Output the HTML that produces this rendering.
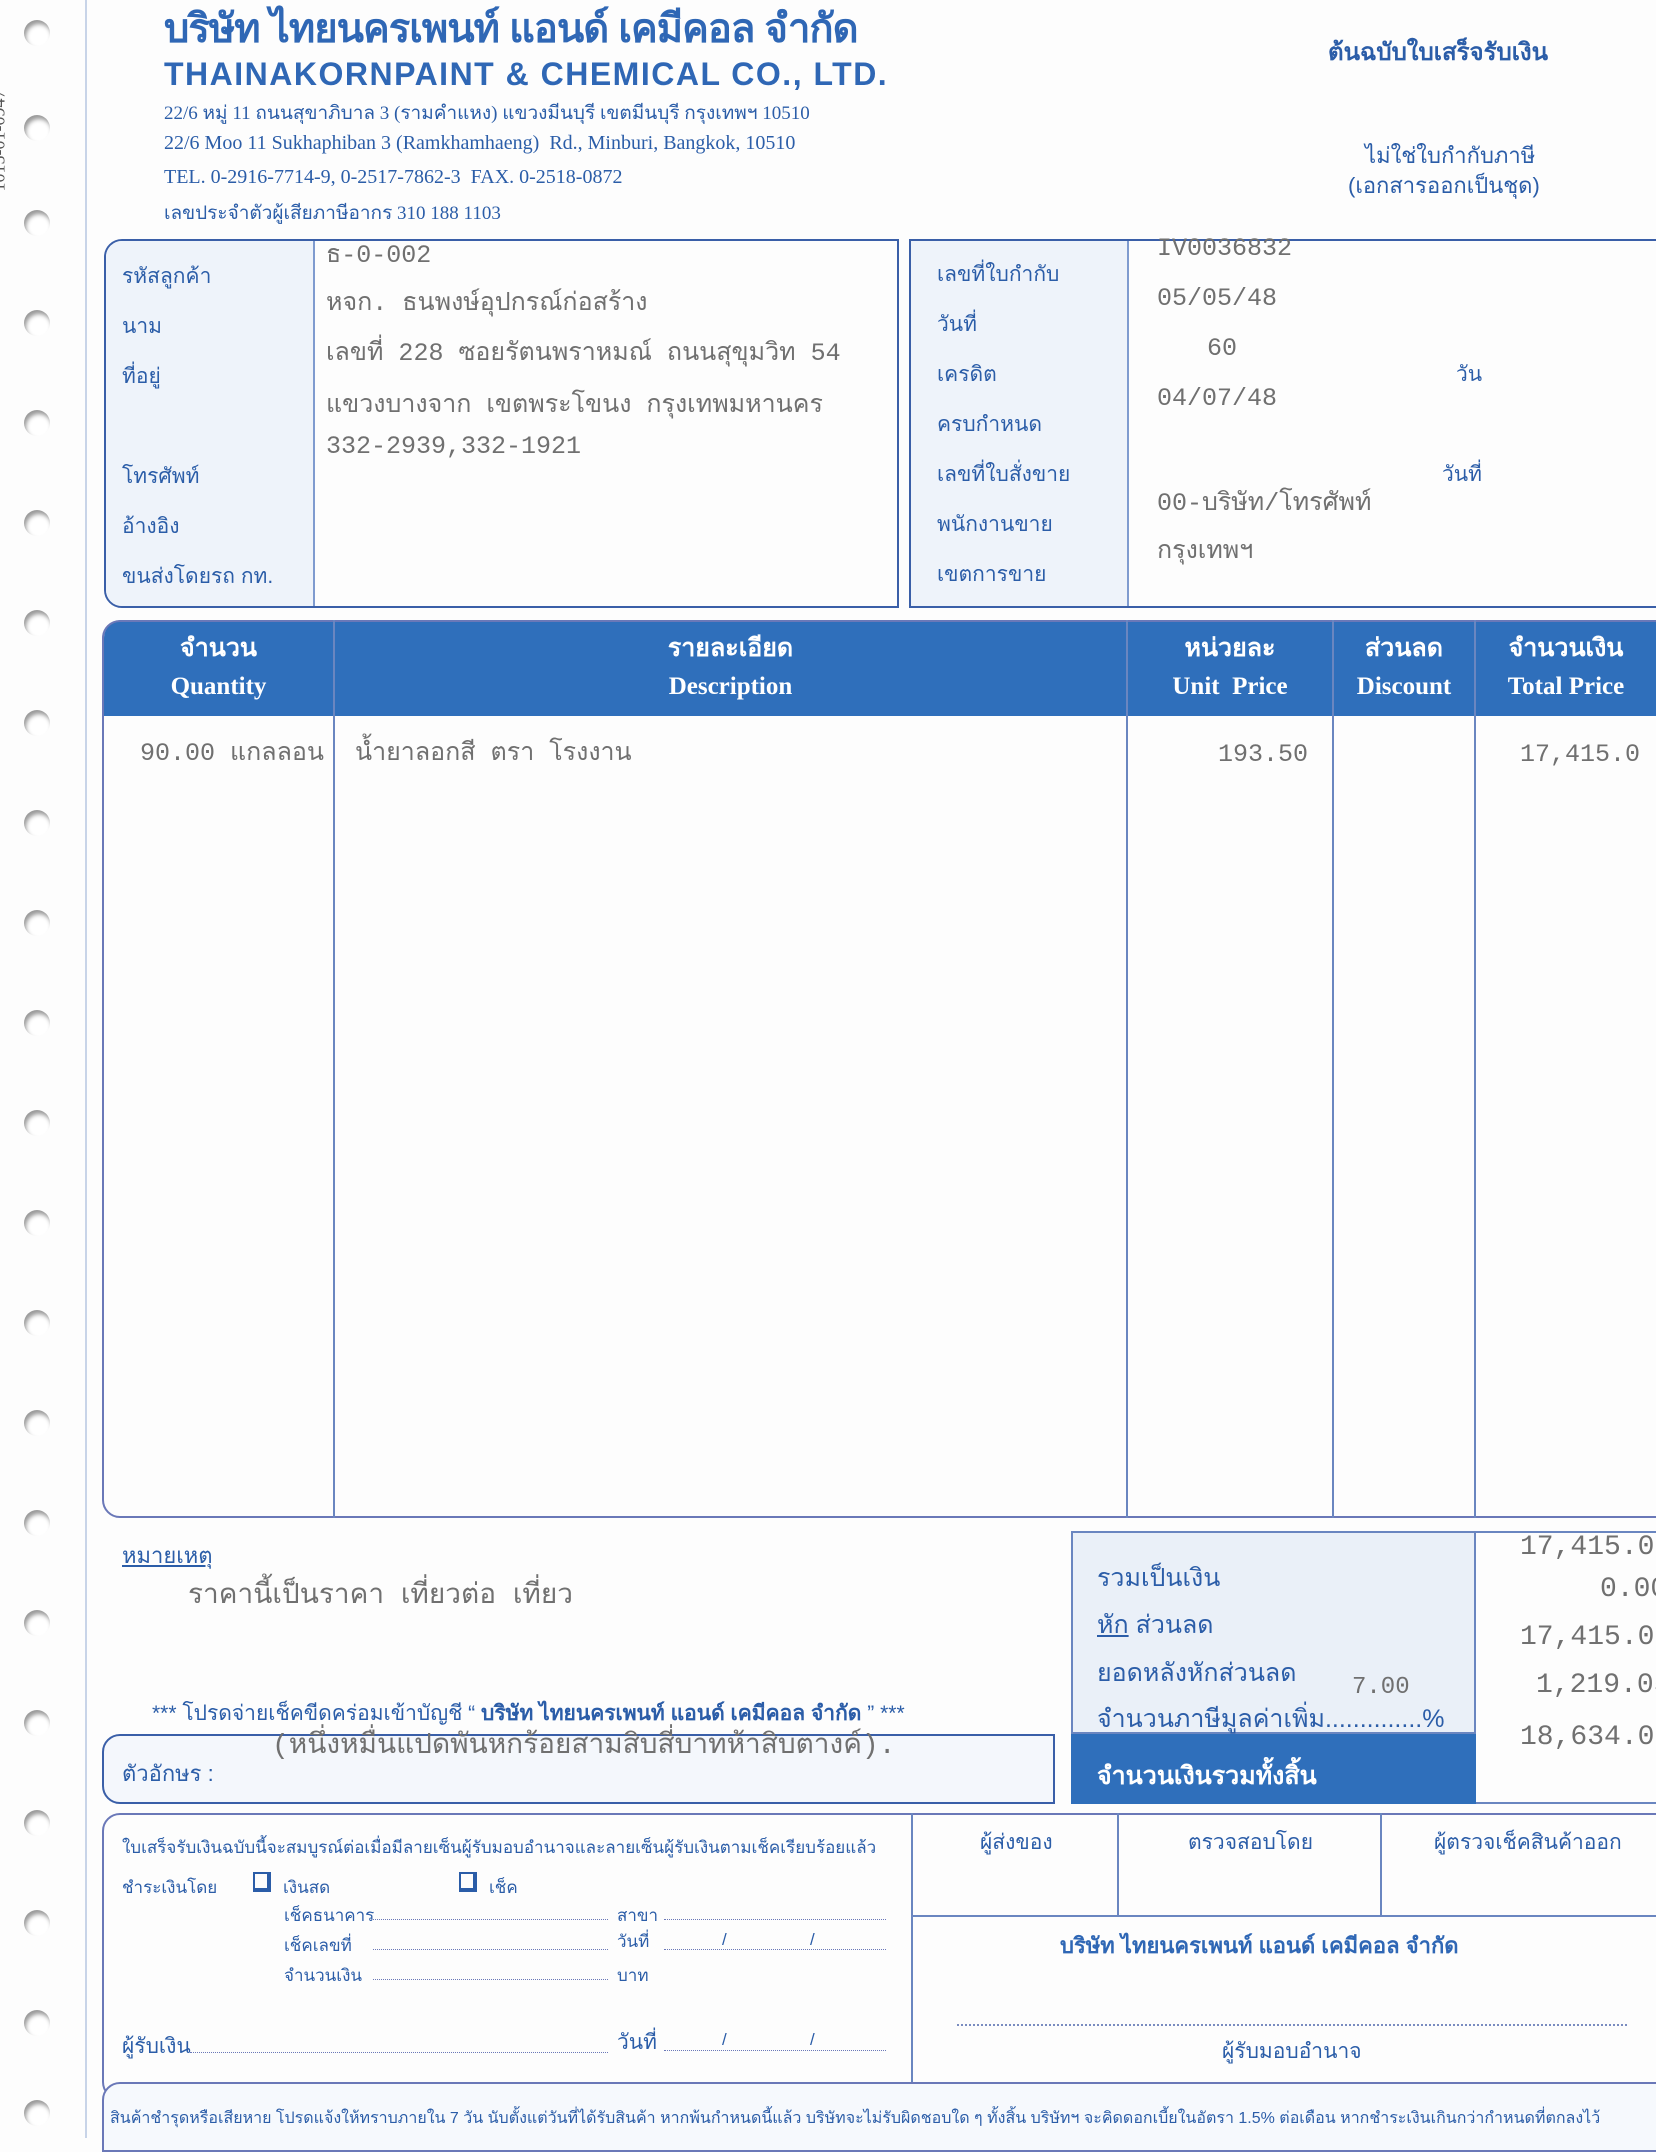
<!DOCTYPE html>
<html><head><meta charset="utf-8"><style>
*{margin:0;padding:0;box-sizing:border-box}
body{width:1656px;height:2138px;background:#fdfdfd;position:relative;overflow:hidden;font-family:"Liberation Sans","Noto Sans CJK SC",sans-serif;color:#2b5da8}
.a{position:absolute;white-space:nowrap}
.lbl{font-size:21px;color:#2b5da8}
.dm{font-family:"Liberation Mono","Noto Sans CJK SC",monospace;color:#707070;font-size:25px}
.box{position:absolute;border:2px solid #3a5fa8}
.hole{position:absolute;left:24px;width:26px;height:26px;border-radius:50%;background:#fff;box-shadow:2px 4px 4px #999 inset}
.hdr{position:absolute;top:620px;height:96px;color:#fff;text-align:center;font-family:"Liberation Serif","Noto Serif CJK SC",serif;font-weight:bold;font-size:25px;line-height:38px;padding-top:10px}
.vl{position:absolute;width:2px;background:#6a86c0}
</style></head><body>
<div class="a" style="left:85px;top:0;width:2px;height:2138px;background:#c8d4e8"></div>
<div class="hole" style="top:20px"></div><div class="hole" style="top:115px"></div><div class="hole" style="top:210px"></div><div class="hole" style="top:310px"></div><div class="hole" style="top:410px"></div><div class="hole" style="top:510px"></div><div class="hole" style="top:610px"></div><div class="hole" style="top:710px"></div><div class="hole" style="top:810px"></div><div class="hole" style="top:910px"></div><div class="hole" style="top:1010px"></div><div class="hole" style="top:1110px"></div><div class="hole" style="top:1210px"></div><div class="hole" style="top:1310px"></div><div class="hole" style="top:1410px"></div><div class="hole" style="top:1510px"></div><div class="hole" style="top:1610px"></div><div class="hole" style="top:1710px"></div><div class="hole" style="top:1810px"></div><div class="hole" style="top:1910px"></div><div class="hole" style="top:2010px"></div><div class="hole" style="top:2100px"></div>
<div class="a" style="left:-52px;top:130px;transform:rotate(-90deg);font-family:'Liberation Serif',serif;font-size:18px;color:#555">1015-01-0947</div>

<div class="a" style="left:164px;top:-4px;font-size:40px;font-weight:bold;color:#2f67b5;letter-spacing:-1px">บริษัท ไทยนครเพนท์ แอนด์ เคมีคอล จำกัด</div>
<div class="a" style="left:164px;top:56px;font-size:32px;font-weight:bold;color:#2f67b5;letter-spacing:1.5px">THAINAKORNPAINT &amp; CHEMICAL CO., LTD.</div>
<div class="a" style="left:164px;top:98px;font-family:'Liberation Serif','Noto Serif CJK SC',serif;font-size:19px">22/6 หมู่ 11 ถนนสุขาภิบาล 3 (รามคำแหง) แขวงมีนบุรี เขตมีนบุรี กรุงเทพฯ 10510</div>
<div class="a" style="left:164px;top:132px;font-family:'Liberation Serif',serif;font-size:20px">22/6 Moo 11 Sukhaphiban 3 (Ramkhamhaeng)&nbsp; Rd., Minburi, Bangkok, 10510</div>
<div class="a" style="left:164px;top:166px;font-family:'Liberation Serif',serif;font-size:20px">TEL. 0-2916-7714-9, 0-2517-7862-3&nbsp; FAX. 0-2518-0872</div>
<div class="a" style="left:164px;top:198px;font-family:'Liberation Serif','Noto Serif CJK SC',serif;font-size:19px">เลขประจำตัวผู้เสียภาษีอากร 310 188 1103</div>
<div class="a" style="left:1328px;top:32px;font-size:24px;font-weight:bold">ต้นฉบับใบเสร็จรับเงิน</div>
<div class="a" style="left:1365px;top:138px;font-size:22px">ไม่ใช่ใบกำกับภาษี</div>
<div class="a" style="left:1348px;top:168px;font-size:22px">(เอกสารออกเป็นชุด)</div>

<div class="box" style="left:104px;top:239px;width:795px;height:369px;border-radius:18px 0 0 18px;overflow:hidden"><div style="position:absolute;left:0;top:0;width:209px;height:100%;background:#eef3fa;border-right:2px solid #7f9bcf"></div></div>
<div class="a lbl" style="left:122px;top:260px">รหัสลูกค้า</div>
<div class="a lbl" style="left:122px;top:310px">นาม</div>
<div class="a lbl" style="left:122px;top:360px">ที่อยู่</div>
<div class="a lbl" style="left:122px;top:460px">โทรศัพท์</div>
<div class="a lbl" style="left:122px;top:510px">อ้างอิง</div>
<div class="a lbl" style="left:122px;top:560px">ขนส่งโดยรถ กท.</div>
<div class="a dm" style="left:326px;top:234px">ธ-0-002</div>
<div class="a dm" style="left:326px;top:282px">หจก. ธนพงษ์อุปกรณ์ก่อสร้าง</div>
<div class="a dm" style="left:326px;top:332px">เลขที่ 228 ซอยรัตนพราหมณ์ ถนนสุขุมวิท 54</div>
<div class="a dm" style="left:326px;top:384px">แขวงบางจาก เขตพระโขนง  กรุงเทพมหานคร</div>
<div class="a dm" style="left:326px;top:432px">332-2939,332-1921</div>

<div class="box" style="left:909px;top:239px;width:760px;height:369px;overflow:hidden"><div style="position:absolute;left:0;top:0;width:218px;height:100%;background:#eef3fa;border-right:2px solid #7f9bcf"></div></div>
<div class="a lbl" style="left:937px;top:258px">เลขที่ใบกำกับ</div>
<div class="a lbl" style="left:937px;top:308px">วันที่</div>
<div class="a lbl" style="left:937px;top:358px">เครดิต</div>
<div class="a lbl" style="left:937px;top:408px">ครบกำหนด</div>
<div class="a lbl" style="left:937px;top:458px">เลขที่ใบสั่งขาย</div>
<div class="a lbl" style="left:937px;top:508px">พนักงานขาย</div>
<div class="a lbl" style="left:937px;top:558px">เขตการขาย</div>
<div class="a lbl" style="left:1456px;top:358px">วัน</div>
<div class="a lbl" style="left:1442px;top:458px">วันที่</div>
<div class="a dm" style="left:1157px;top:234px">IV0036832</div>
<div class="a dm" style="left:1157px;top:284px">05/05/48</div>
<div class="a dm" style="left:1207px;top:334px">60</div>
<div class="a dm" style="left:1157px;top:384px">04/07/48</div>
<div class="a dm" style="left:1157px;top:482px">00-บริษัท/โทรศัพท์</div>
<div class="a dm" style="left:1157px;top:530px">กรุงเทพฯ</div>

<div class="a" style="left:104px;top:620px;width:1552px;height:96px;background:#2f6fbb;border-radius:18px 0 0 0"></div>
<div class="box" style="left:102px;top:620px;width:1560px;height:898px;border-radius:18px 0 0 18px;border-color:#6a78b8"></div>
<div class="vl" style="left:333px;top:620px;height:898px"></div>
<div class="vl" style="left:1126px;top:620px;height:898px"></div>
<div class="vl" style="left:1332px;top:620px;height:898px"></div>
<div class="vl" style="left:1474px;top:620px;height:898px"></div>
<div class="hdr" style="left:104px;width:229px">จำนวน<br>Quantity</div>
<div class="hdr" style="left:335px;width:791px">รายละเอียด<br>Description</div>
<div class="hdr" style="left:1128px;width:204px">หน่วยละ<br>Unit&nbsp; Price</div>
<div class="hdr" style="left:1334px;width:140px">ส่วนลด<br>Discount</div>
<div class="hdr" style="left:1476px;width:180px">จำนวนเงิน<br>Total Price</div>
<div class="a dm" style="left:140px;top:732px">90.00 แกลลอน</div>
<div class="a dm" style="left:355px;top:732px">น้ำยาลอกสี ตรา โรงงาน</div>
<div class="a dm" style="left:1218px;top:740px">193.50</div>
<div class="a dm" style="left:1520px;top:740px">17,415.0</div>

<div class="a" style="left:122px;top:1538px;font-size:22px;text-decoration:underline">หมายเหตุ</div>
<div class="a dm" style="left:188px;top:1572px;font-size:28px">ราคานี้เป็นราคา เที่ยวต่อ เที่ยว</div>
<div class="a" style="left:152px;top:1697px;font-size:21px">*** โปรดจ่ายเช็คขีดคร่อมเข้าบัญชี “ <b>บริษัท ไทยนครเพนท์ แอนด์ เคมีคอล จำกัด</b> ” ***</div>
<div class="box" style="left:102px;top:1734px;width:953px;height:70px;border-radius:18px 0 0 18px;background:#f4f7fc"></div>
<div class="a lbl" style="left:122px;top:1756px;font-size:22px">ตัวอักษร :</div>
<div class="a dm" style="left:272px;top:1722px;font-size:28px">(หนึ่งหมื่นแปดพันหกร้อยสามสิบสี่บาทห้าสิบตางค์).</div>

<div class="a" style="left:1071px;top:1531px;width:405px;height:203px;background:#eaf0f8;border:2px solid #6a86c0"></div>
<div class="a" style="left:1071px;top:1734px;width:405px;height:70px;background:#2f6fbb"></div>
<div class="a" style="left:1476px;top:1531px;width:180px;height:273px;border-top:2px solid #6a86c0;border-bottom:2px solid #6a86c0"></div>
<div class="a lbl" style="left:1097px;top:1558px;font-size:25px">รวมเป็นเงิน</div>
<div class="a lbl" style="left:1097px;top:1605px;font-size:25px"><u>หัก</u> ส่วนลด</div>
<div class="a lbl" style="left:1097px;top:1653px;font-size:25px">ยอดหลังหักส่วนลด</div>
<div class="a lbl" style="left:1097px;top:1699px;font-size:25px">จำนวนภาษีมูลค่าเพิ่ม..............%</div>
<div class="a dm" style="left:1352px;top:1674px;font-size:24px">7.00</div>
<div class="a" style="left:1097px;top:1756px;font-size:25px;font-weight:bold;color:#fff">จำนวนเงินรวมทั้งสิ้น</div>
<div class="a dm" style="left:1520px;top:1532px;font-size:28px">17,415.00</div>
<div class="a dm" style="left:1600px;top:1574px;font-size:28px">0.00</div>
<div class="a dm" style="left:1520px;top:1622px;font-size:28px">17,415.00</div>
<div class="a dm" style="left:1536px;top:1670px;font-size:28px">1,219.05</div>
<div class="a dm" style="left:1520px;top:1722px;font-size:28px">18,634.05</div>

<div class="box" style="left:102px;top:1813px;width:1560px;height:287px;border-radius:18px 0 0 18px;border-color:#6a78b8"></div>
<div class="vl" style="left:911px;top:1813px;height:287px"></div>
<div class="vl" style="left:1117px;top:1813px;height:102px"></div>
<div class="vl" style="left:1380px;top:1813px;height:102px"></div>
<div class="a" style="left:911px;top:1915px;width:745px;height:2px;background:#6a86c0"></div>
<div class="a lbl" style="left:122px;top:1834px;font-size:17px">ใบเสร็จรับเงินฉบับนี้จะสมบูรณ์ต่อเมื่อมีลายเซ็นผู้รับมอบอำนาจและลายเซ็นผู้รับเงินตามเช็คเรียบร้อยแล้ว</div>
<div class="a lbl" style="left:122px;top:1874px;font-size:17px">ชำระเงินโดย</div>
<div class="a" style="left:253px;top:1872px;width:18px;height:20px;border:2px solid #2b5da8;border-right-width:4px;border-bottom-width:4px"></div>
<div class="a lbl" style="left:283px;top:1874px;font-size:17px">เงินสด</div>
<div class="a" style="left:459px;top:1872px;width:18px;height:20px;border:2px solid #2b5da8;border-right-width:4px;border-bottom-width:4px"></div>
<div class="a lbl" style="left:489px;top:1874px;font-size:17px">เช็ค</div>
<div class="a" style="left:373px;top:1919px;width:235px;border-top:1px dotted #6a78b8"></div>
<div class="a" style="left:664px;top:1919px;width:222px;border-top:1px dotted #6a78b8"></div>
<div class="a" style="left:373px;top:1949px;width:235px;border-top:1px dotted #6a78b8"></div>
<div class="a" style="left:664px;top:1949px;width:222px;border-top:1px dotted #6a78b8"></div>
<div class="a" style="left:373px;top:1979px;width:235px;border-top:1px dotted #6a78b8"></div>
<div class="a lbl" style="left:284px;top:1902px;font-size:17px">เช็คธนาคาร</div>
<div class="a lbl" style="left:617px;top:1902px;font-size:17px">สาขา</div>
<div class="a lbl" style="left:284px;top:1932px;font-size:17px">เช็คเลขที่</div>
<div class="a lbl" style="left:617px;top:1928px;font-size:17px">วันที่</div>
<div class="a lbl" style="left:722px;top:1930px;font-size:17px">/</div>
<div class="a lbl" style="left:810px;top:1930px;font-size:17px">/</div>
<div class="a lbl" style="left:284px;top:1962px;font-size:17px">จำนวนเงิน</div>
<div class="a lbl" style="left:617px;top:1962px;font-size:17px">บาท</div>
<div class="a lbl" style="left:122px;top:2030px">ผู้รับเงิน</div>
<div class="a" style="left:190px;top:2052px;width:418px;border-top:1px dotted #6a78b8"></div>
<div class="a lbl" style="left:617px;top:2026px">วันที่</div>
<div class="a" style="left:664px;top:2050px;width:222px;border-top:1px dotted #6a78b8"></div>
<div class="a lbl" style="left:722px;top:2030px;font-size:17px">/</div>
<div class="a lbl" style="left:810px;top:2030px;font-size:17px">/</div>
<div class="a lbl" style="left:980px;top:1826px">ผู้ส่งของ</div>
<div class="a lbl" style="left:1188px;top:1826px">ตรวจสอบโดย</div>
<div class="a lbl" style="left:1434px;top:1826px">ผู้ตรวจเช็คสินค้าออก</div>
<div class="a" style="left:1060px;top:1928px;font-size:22px;font-weight:bold;color:#2f67b5">บริษัท ไทยนครเพนท์ แอนด์ เคมีคอล จำกัด</div>
<div class="a" style="left:957px;top:2024px;width:670px;border-top:2px dotted #7a8cc0"></div>
<div class="a lbl" style="left:1222px;top:2035px">ผู้รับมอบอำนาจ</div>

<div class="box" style="left:102px;top:2082px;width:1560px;height:70px;border-radius:18px 0 0 0;border-color:#6a78b8;background:#f6f9fd"></div>
<div class="a lbl" style="left:110px;top:2106px;font-size:16px">สินค้าชำรุดหรือเสียหาย โปรดแจ้งให้ทราบภายใน 7 วัน นับตั้งแต่วันที่ได้รับสินค้า หากพ้นกำหนดนี้แล้ว บริษัทจะไม่รับผิดชอบใด ๆ ทั้งสิ้น บริษัทฯ จะคิดดอกเบี้ยในอัตรา 1.5% ต่อเดือน หากชำระเงินเกินกว่ากำหนดที่ตกลงไว้</div>
</body></html>
